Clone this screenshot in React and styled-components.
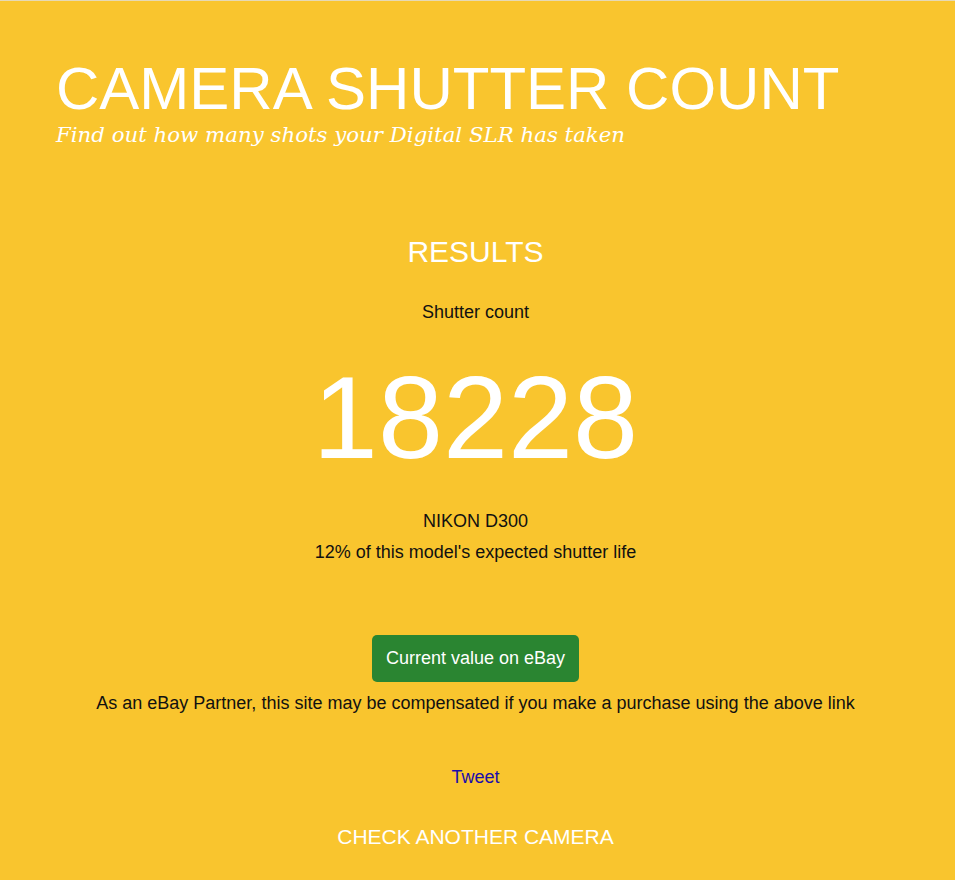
import React from "react";
import styled, { createGlobalStyle } from "styled-components";

const Global = createGlobalStyle`
  html, body { margin: 0; padding: 0; background: #f9c52e; }
  body { font-family: "Liberation Sans", Arial, sans-serif; }
`;

const Page = styled.div`
  border-top: 1px solid #e6d9b5;
  background: #f9c52e;
  min-height: 879px;
  display: flex;
  flex-direction: column;
`;

const Header = styled.header`
  padding: 56px 56px 0;
`;

const Title = styled.h1`
  margin: 0;
  font-family: "Liberation Sans", Arial, sans-serif;
  font-weight: 400;
  font-size: 60px;
  line-height: 64px;
  color: #fff;
`;

const Tagline = styled.p`
  margin: 0;
  font-family: "DejaVu Serif", Georgia, serif;
  font-style: italic;
  font-size: 21.3px;
  line-height: 28px;
  color: #fff;
`;

const Results = styled.main`
  display: flex;
  flex-direction: column;
  align-items: center;
  text-align: center;
  padding: 87px 4px 0 0;
`;

const Heading = styled.h2`
  margin: 0;
  font-weight: 400;
  font-size: 30px;
  line-height: 32px;
  color: #fff;
`;

const Label = styled.div`
  font-size: 18px;
  line-height: 24px;
  color: #111;
  margin-top: ${(p) => p.$mt || 0}px;
`;

const Count = styled.div`
  font-size: 117px;
  line-height: 130px;
  color: #fff;
  margin-top: 29px;
`;

const Button = styled.a`
  display: inline-flex;
  align-items: center;
  justify-content: center;
  width: 207px;
  height: 47px;
  box-sizing: border-box;
  border-radius: 5px;
  background: #2a8531;
  color: #fff;
  font-size: 18px;
  text-decoration: none;
  margin-top: 71px;
`;

const Note = styled.p`
  margin: 9px 0 0;
  font-size: 18px;
  line-height: 24px;
  color: #111;
`;

const Tweet = styled.a`
  margin-top: 50px;
  font-size: 18px;
  line-height: 24px;
  color: #1a0dab;
  text-decoration: none;
`;

const Another = styled.a`
  margin-top: 35px;
  font-size: 21px;
  line-height: 26px;
  color: #fff;
  text-decoration: none;
`;

export default function App() {
  return (
    <>
      <Global />
      <Page>
        <Header>
          <Title>CAMERA SHUTTER COUNT</Title>
          <Tagline>Find out how many shots your Digital SLR has taken</Tagline>
        </Header>
        <Results>
          <Heading>RESULTS</Heading>
          <Label $mt={32}>Shutter count</Label>
          <Count>18228</Count>
          <Label $mt={26}>NIKON D300</Label>
          <Label $mt={7}>12% of this model's expected shutter life</Label>
          <Button href="#">Current value on eBay</Button>
          <Note>As an eBay Partner, this site may be compensated if you make a purchase using the above link</Note>
          <Tweet href="#">Tweet</Tweet>
          <Another href="#">CHECK ANOTHER CAMERA</Another>
        </Results>
      </Page>
    </>
  );
}
